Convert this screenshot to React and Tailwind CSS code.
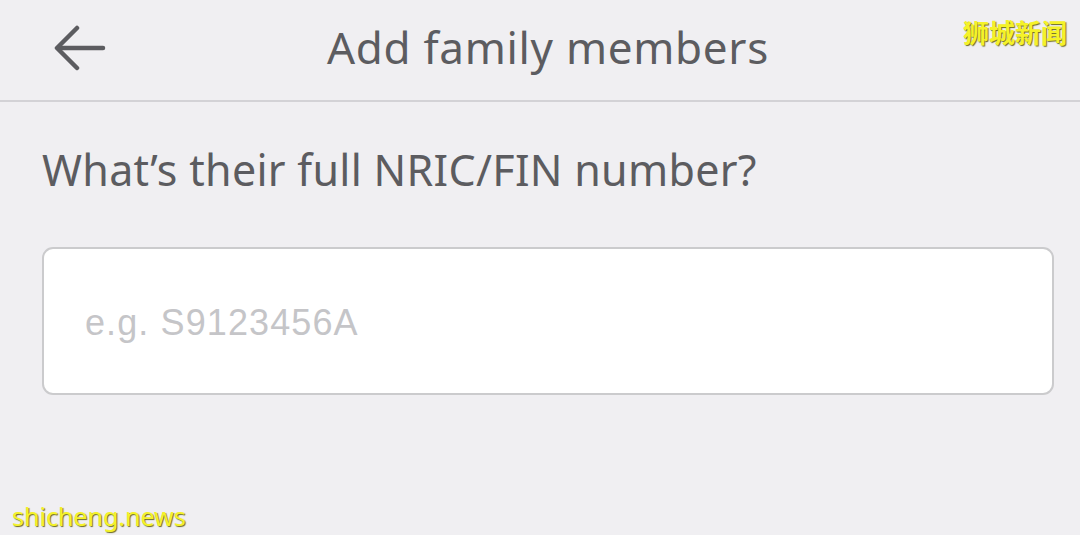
import React from "react";

export default function App() {
  return (
    <div className="w-[1080px] h-[535px] bg-[#f0eff2] flex flex-col overflow-hidden relative font-['Noto_Sans',sans-serif]">
      <header className="h-[102px] shrink-0 border-b-2 border-[#d3d2d6] grid grid-cols-[1fr_auto_1fr] items-center">
        <div className="pl-[54px] flex items-center">
          <svg width="52" height="50" viewBox="0 0 52 50" fill="none" stroke="#5c5c60" strokeWidth="4.5" strokeLinecap="round" strokeLinejoin="round">
            <path d="M49 23 H4" />
            <path d="M23 3 L3 23 L23 43" />
          </svg>
        </div>
        <h1 className="text-center text-[#5c5c60] text-[44px] leading-[52px] tracking-[0.7px] pb-[6px] pl-[16px]">
          Add family members
        </h1>
        <div className="flex justify-end self-start pt-[16px] pr-[13px]">
          <span className="text-[26px] leading-[32px] text-[#f5f229] font-bold font-['Noto_Sans_CJK_SC',sans-serif] [text-shadow:1px_1px_1px_#6b6b20]">
            狮城新闻
          </span>
        </div>
      </header>
      <main className="px-[42px] pt-[40px] flex flex-col">
        <p className="text-[#5c5c60] text-[43px] leading-[56px] tracking-[0.3px]">
          What’s their full NRIC/FIN number?
        </p>
        <div className="mt-[49px] w-[1012px] h-[148px] bg-white border-2 border-[#cbcbcd] rounded-[11px] flex items-center pl-[41px] pt-[4px]">
          <span className="text-[#c5c5c8] text-[36px] leading-[40px] tracking-[1.1px] font-['Liberation_Sans',Arial,sans-serif]">
            e.g. S9123456A
          </span>
        </div>
      </main>
      <footer className="mt-auto pl-[12px] pb-[3px]">
        <span className="text-[25px] leading-[32px] text-[#f5f229] [text-shadow:1px_1px_1px_#6b6b20]">
          shicheng.news
        </span>
      </footer>
    </div>
  );
}
